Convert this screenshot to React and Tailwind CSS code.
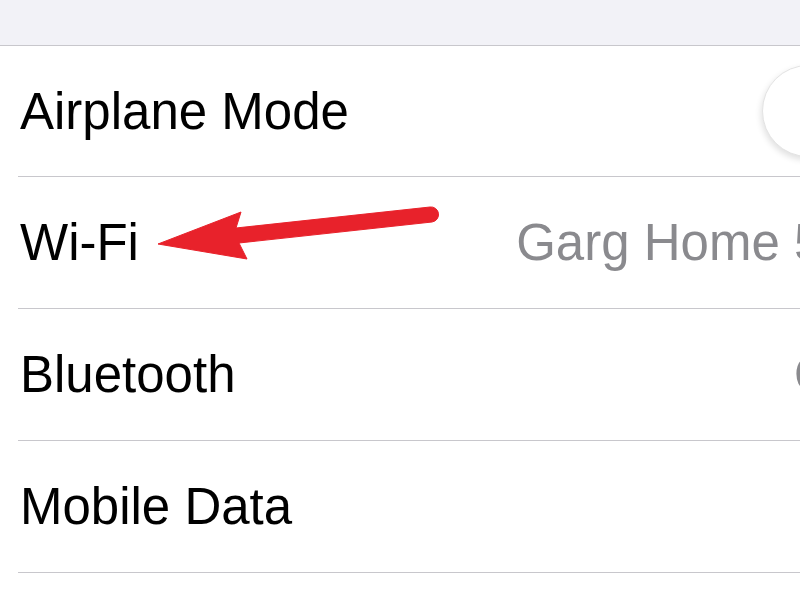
import React from "react";

const font = { fontFamily: '"Liberation Sans", Arial, sans-serif' };

function Row({ label, first, children }) {
  return (
    <div className={first ? "h-[131px] flex flex-col" : "h-[132px] flex flex-col"}>
      <div className="flex-1 flex items-center pl-[20px] pr-[18px] w-[880px]">
        <span className="text-[51px] leading-none text-black whitespace-nowrap">{label}</span>
        <div className="ml-auto flex items-center">{children}</div>
      </div>
      <div className="ml-[18px] h-px bg-[#c8c7cc]" />
    </div>
  );
}

export default function App() {
  return (
    <div className="relative w-[800px] h-[600px] overflow-hidden bg-white" style={font}>
      <div className="h-[45px] bg-[#f2f2f7]" />
      <div className="h-px bg-[#c8c7cc]" />
      <Row label="Airplane Mode" first>
        <div className="w-[100px] h-[92px] flex items-center">
          <div className="w-[92px] h-[92px] rounded-full bg-white border border-[#e3e3e3] shadow-[-1px_3px_6px_rgba(0,0,0,0.12)]" />
        </div>
      </Row>
      <Row label="Wi-Fi">
        <span className="text-[51px] leading-none text-[#8a8a8e] whitespace-nowrap">Garg Home 5G</span>
      </Row>
      <Row label="Bluetooth">
        <span className="text-[51px] leading-none text-[#8a8a8e] whitespace-nowrap">On</span>
      </Row>
      <Row label="Mobile Data" />
      <svg className="absolute left-0 top-0" width="800" height="600" viewBox="0 0 800 600">
        <path
          d="M158,244 L241,212 L236,228 L430,207 A7.5,7.5 0 0 1 432,222 L239,243 L247,259 Z"
          fill="#e8222b"
          stroke="#e8222b"
          strokeWidth="1"
          strokeLinejoin="round"
        />
      </svg>
    </div>
  );
}
